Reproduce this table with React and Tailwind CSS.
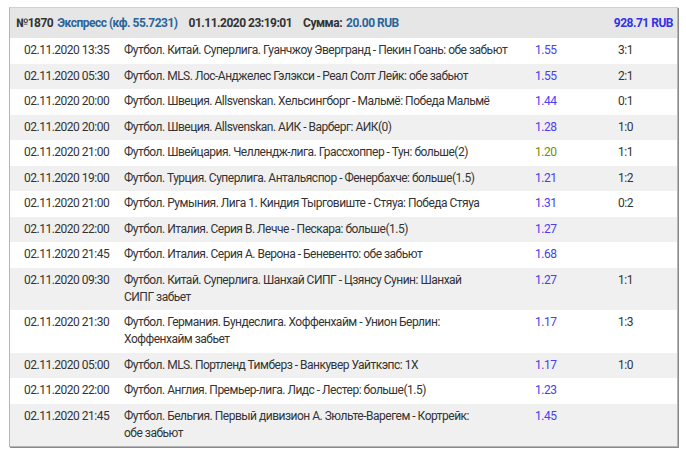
import React from "react";

const rows = [
  ["02.11.2020 13:35", ["Футбол. Китай. Суперлига. Гуанчжоу Эвергранд - Пекин Гоань: обе забьют"], "1.55", "3:1"],
  ["02.11.2020 05:30", ["Футбол. MLS. Лос-Анджелес Гэлэкси - Реал Солт Лейк: обе забьют"], "1.55", "2:1"],
  ["02.11.2020 20:00", ["Футбол. Швеция. Allsvenskan. Хельсингборг - Мальмё: Победа Мальмё"], "1.44", "0:1"],
  ["02.11.2020 20:00", ["Футбол. Швеция. Allsvenskan. АИК - Варберг: АИК(0)"], "1.28", "1:0"],
  ["02.11.2020 21:00", ["Футбол. Швейцария. Челлендж-лига. Грассхоппер - Тун: больше(2)"], "1.20", "1:1", true],
  ["02.11.2020 19:00", ["Футбол. Турция. Суперлига. Антальяспор - Фенербахче: больше(1.5)"], "1.21", "1:2"],
  ["02.11.2020 21:00", ["Футбол. Румыния. Лига 1. Киндия Тырговиште - Стяуа: Победа Стяуа"], "1.31", "0:2"],
  ["02.11.2020 22:00", ["Футбол. Италия. Серия В. Лечче - Пескара: больше(1.5)"], "1.27", ""],
  ["02.11.2020 21:45", ["Футбол. Италия. Серия А. Верона - Беневенто: обе забьют"], "1.68", ""],
  ["02.11.2020 09:30", ["Футбол. Китай. Суперлига. Шанхай СИПГ - Цзянсу Сунин: Шанхай", "СИПГ забьет"], "1.27", "1:1"],
  ["02.11.2020 21:30", ["Футбол. Германия. Бундеслига. Хоффенхайм - Унион Берлин:", "Хоффенхайм забьет"], "1.17", "1:3"],
  ["02.11.2020 05:00", ["Футбол. MLS. Портленд Тимберз - Ванкувер Уайткэпс: 1X"], "1.17", "1:0"],
  ["02.11.2020 22:00", ["Футбол. Англия. Премьер-лига. Лидс - Лестер: больше(1.5)"], "1.23", ""],
  ["02.11.2020 21:45", ["Футбол. Бельгия. Первый дивизион А. Зюльте-Варегем - Кортрейк:", "обе забьют"], "1.45", ""],
];

export default function App() {
  return (
    <div
      className="bg-white w-[686px] h-[453px] pt-[7px] pl-[9px] text-[12px] tracking-[-0.5px] text-[#333]"
      style={{ fontFamily: "Roboto, 'Noto Sans', sans-serif" }}
    >
      <div className="w-[669px] border border-[#b5b5b5] border-t-[#d0d0d0] shadow-[1px_1px_0_#8a8a8a]">
        <div className="h-[30px] bg-[#e6e6e6] flex items-center justify-between pl-[6px] pr-[4px] font-bold">
          <div className="flex items-center">
            <span className="text-[#333]">№1870</span>
            <span className="text-[#2a6599] ml-[4px]">Экспресс (кф. 55.7231)</span>
            <span className="ml-[11px] text-[#333]">01.11.2020 23:19:01</span>
            <span className="ml-[11px] text-[#333]">Сумма:</span>
            <span className="ml-[4px] text-[#2a6599]">20.00 RUB</span>
          </div>
          <span className="text-[#3232e6]">928.71 RUB</span>
        </div>
        {rows.map((r, i) => (
          <div
            key={i}
            className={`flex py-[4.25px] leading-[17px] ${i % 2 === 0 ? "bg-white" : "bg-[#f0f0f0]"}`}
          >
            <div className="w-[114px] pl-[14px] shrink-0">{r[0]}</div>
            <div className="w-[411px] shrink-0">
              {r[1].map((l, j) => (
                <div key={j} className="whitespace-nowrap">{l}</div>
              ))}
            </div>
            <div className={`w-[83px] shrink-0 ${r[4] ? "text-[#7a8a00]" : "text-[#4a3ef0]"}`}>{r[2]}</div>
            <div className="shrink-0">{r[3]}</div>
          </div>
        ))}
      </div>
    </div>
  );
}
